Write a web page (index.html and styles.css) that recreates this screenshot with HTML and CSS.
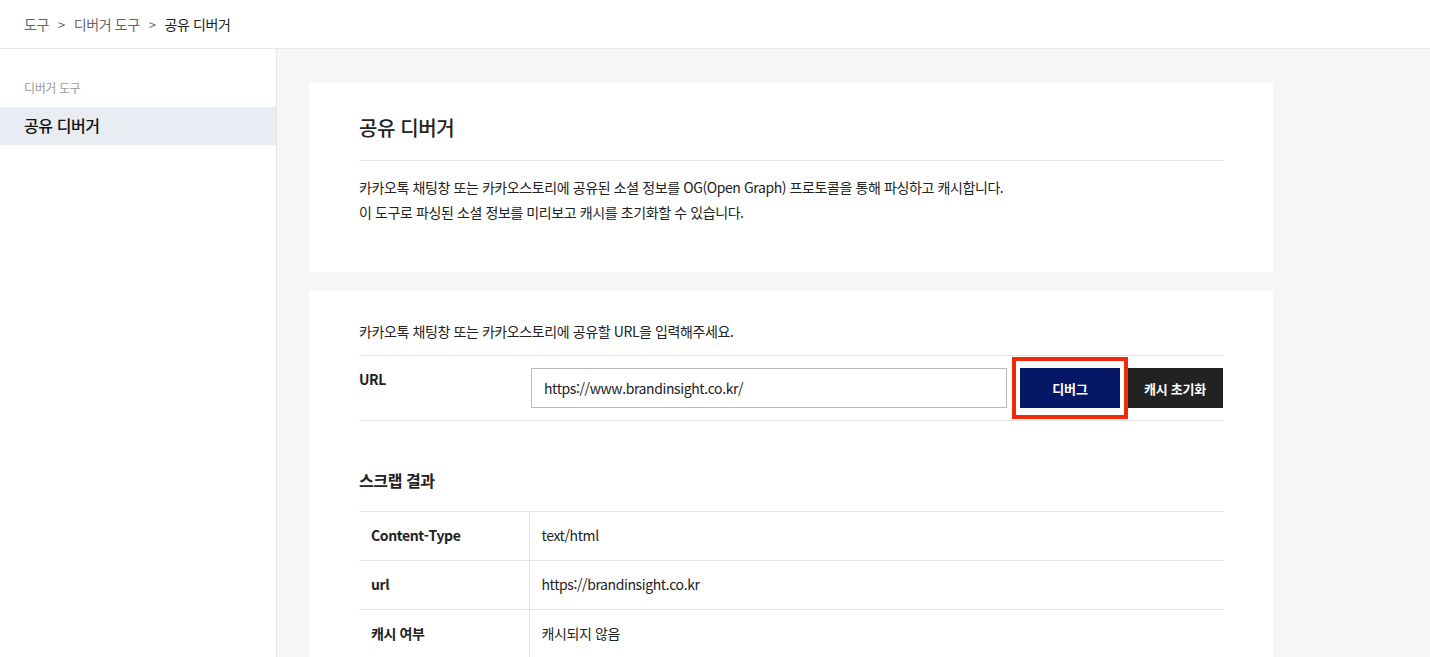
FILE: index.html
```html
<!DOCTYPE html>
<html lang="ko">
<head>
  <meta charset="utf-8">
  <title>공유 디버거</title>
  <link rel="stylesheet" href="styles.css">
</head>
<body>

<div class="header">
  <span class="crumb">도구</span>
  <span class="sep">&gt;</span>
  <span class="crumb">디버거 도구</span>
  <span class="sep">&gt;</span>
  <span class="crumb current">공유 디버거</span>
</div>

<div class="layout">
  <div class="sidebar">
    <div class="side-title">디버거 도구</div>
    <div class="side-item active">공유 디버거</div>
  </div>

  <div class="main">
    <div class="card intro">
      <h2 class="card-title">공유 디버거</h2>
      <p class="desc">카카오톡 채팅창 또는 카카오스토리에 공유된 소셜 정보를 OG(Open Graph) 프로토콜을 통해 파싱하고 캐시합니다.<br>이 도구로 파싱된 소셜 정보를 미리보고 캐시를 초기화할 수 있습니다.</p>
    </div>

    <div class="card form">
      <p class="guide">카카오톡 채팅창 또는 카카오스토리에 공유할 URL을 입력해주세요.</p>
      <div class="url-row">
        <label class="url-label" for="url">URL</label>
        <input type="text" id="url" class="url-input" value="https://www.brandinsight.co.kr/">
        <span class="mark">
          <button type="button" class="btn btn-debug">디버그</button>
        </span>
        <button type="button" class="btn btn-reset">캐시 초기화</button>
      </div>

      <h3 class="result-title">스크랩 결과</h3>
      <table class="result">
        <tr>
          <th>Content-Type</th>
          <td>text/html</td>
        </tr>
        <tr>
          <th>url</th>
          <td>https://brandinsight.co.kr</td>
        </tr>
        <tr>
          <th>캐시 여부</th>
          <td>캐시되지 않음</td>
        </tr>
      </table>
    </div>
  </div>
</div>

</body>
</html>
```

FILE: styles.css
```css
* {
  box-sizing: border-box;
}

body {
  margin: 0;
  font-family: "Noto Sans CJK KR", "Noto Sans", sans-serif;
  color: #222;
  background: #fff;
  letter-spacing: -0.4px;
  overflow: hidden;
}

.header {
  height: 49px;
  padding: 0 24px;
  display: flex;
  align-items: center;
  gap: 9px;
  font-size: 14px;
  border-bottom: 1px solid #e6e6e6;
  background: #fff;
}

.crumb {
  color: #666;
}

.crumb.current {
  color: #222;
}

.sep {
  color: #666;
  font-size: 13px;
}

.layout {
  display: flex;
  height: 608px;
}

.sidebar {
  width: 277px;
  flex-shrink: 0;
  border-right: 1px solid #e6e6e6;
  padding-top: 28px;
}

.side-title {
  padding: 0 24px;
  font-size: 12px;
  line-height: 22px;
  color: #999;
  margin-bottom: 8px;
}

.side-item {
  padding: 0 24px;
  height: 38px;
  line-height: 37px;
  font-size: 16px;
  font-weight: 500;
  color: #111;
}

.side-item.active {
  background: #e9ecf3;
}

.main {
  flex: 1;
  background: #f5f6f6;
  padding: 33px 32px 0;
}

.card {
  width: 964px;
  background: #fff;
  padding: 0 50px;
}

.intro {
  height: 190px;
  padding-top: 32px;
  margin-bottom: 18px;
}

.card-title {
  margin: 0;
  font-size: 20px;
  font-weight: 500;
  line-height: 28px;
  padding-bottom: 18px;
  border-bottom: 1px solid #e4e4e4;
}

.desc {
  margin: 14px 0 0;
  font-size: 14px;
  line-height: 25px;
  color: #222;
}

.form {
  padding-top: 29px;
  height: 400px;
}

.guide {
  margin: 0 0 12px;
  font-size: 14px;
  line-height: 24px;
}

.url-row {
  display: flex;
  align-items: flex-start;
  padding: 12px 0;
  border-top: 1px solid #e4e4e4;
  border-bottom: 1px solid #e4e4e4;
}

.url-label {
  width: 172px;
  font-size: 14px;
  font-weight: 700;
  line-height: 22px;
}

.url-input {
  flex: 1;
  height: 40px;
  margin: 0;
  padding: 0 12px;
  border: 1px solid #b8b8b8;
  border-radius: 0;
  font-family: inherit;
  font-size: 14px;
  letter-spacing: -0.4px;
  color: #222;
  outline: none;
}

.btn {
  height: 40px;
  border: none;
  border-radius: 0;
  font-family: inherit;
  font-size: 13px;
  font-weight: 700;
  letter-spacing: -0.2px;
  color: #fff;
  cursor: pointer;
}

.mark {
  position: relative;
  margin: 0 7px 0 13px;
  display: block;
}

.mark::after {
  content: "";
  position: absolute;
  left: -8px;
  right: -8px;
  top: -11px;
  bottom: -11px;
  border: 4px solid #f2280b;
}

.btn-debug {
  width: 100px;
  display: block;
  background: #061766;
}

.btn-reset {
  width: 96px;
  background: #222;
}

.result-title {
  margin: 47px 0 19px;
  font-size: 16px;
  font-weight: 700;
  line-height: 24px;
}

.result {
  width: 100%;
  border-collapse: collapse;
  font-size: 14px;
}

.result tr {
  border-top: 1px solid #e4e4e4;
}

.result th,
.result td {
  height: 49px;
  padding: 0 12px 3px;
  text-align: left;
}

.result th {
  width: 170px;
  font-weight: 700;
  border-right: 1px solid #e4e4e4;
}

.result td {
  font-weight: 400;
}
```
